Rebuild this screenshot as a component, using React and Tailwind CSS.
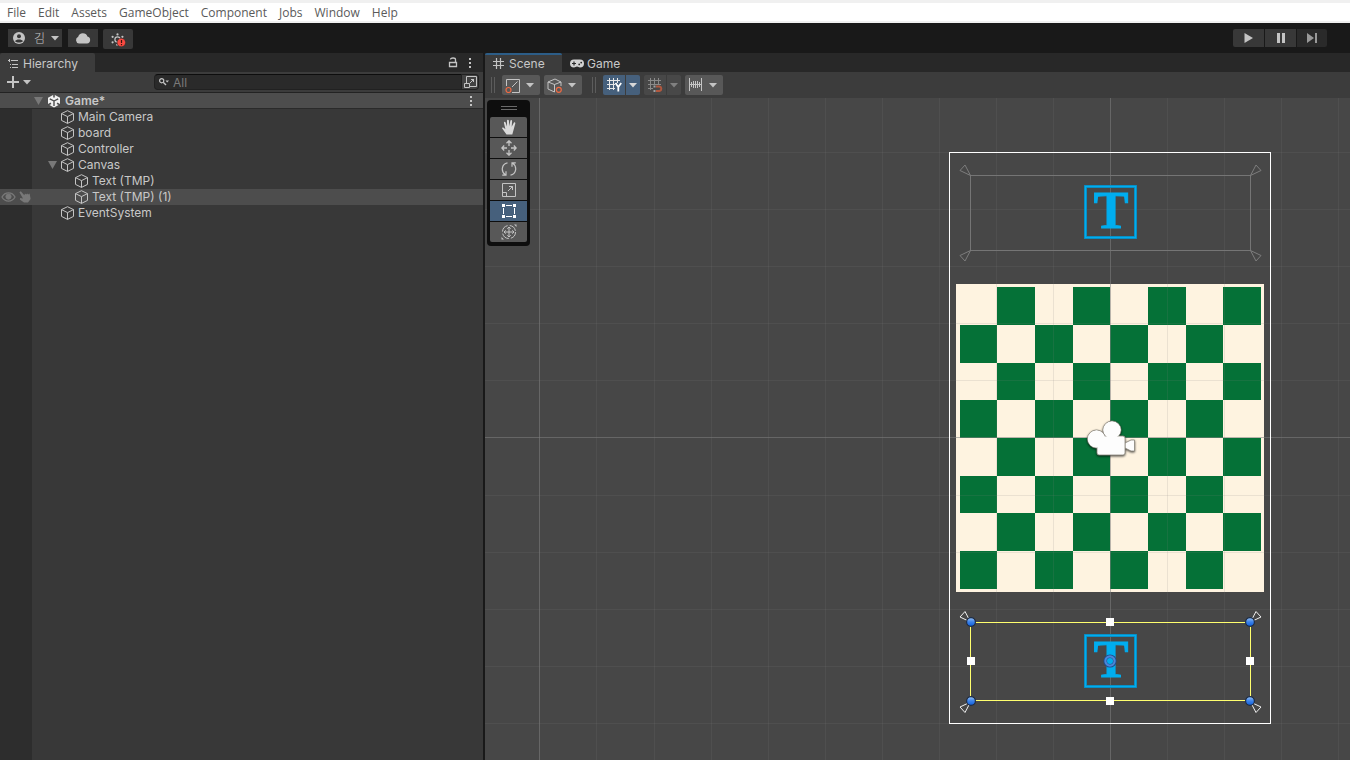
const MENU_ITEMS = ["File", "Edit", "Assets", "GameObject", "Component", "Jobs", "Window", "Help"];

const OBJECTS = [
  { name: "Main Camera", depth: 0 },
  { name: "board", depth: 0 },
  { name: "Controller", depth: 0 },
  { name: "Canvas", depth: 0, open: true },
  { name: "Text (TMP)", depth: 1 },
  { name: "Text (TMP) (1)", depth: 1, selected: true },
  { name: "EventSystem", depth: 0 },
];

function Caret({ className = "text-[#c4c4c4]" }) {
  return (
    <svg width="8" height="5" viewBox="0 0 8 5" className={`shrink-0 ${className}`}>
      <path d="M0 0h8L4 4.5z" fill="currentColor" />
    </svg>
  );
}

function FoldArrow() {
  return (
    <svg width="10" height="8" viewBox="0 0 10 8" className="shrink-0 text-[#787878]">
      <path d="M0 0h9L4.5 8z" fill="currentColor" />
    </svg>
  );
}

function Kebab() {
  return (
    <svg width="4" height="12" viewBox="0 0 4 12" fill="#c4c4c4">
      <rect x="1" y="1" width="2" height="2" />
      <rect x="1" y="5" width="2" height="2" />
      <rect x="1" y="9" width="2" height="2" />
    </svg>
  );
}

function CubeIcon() {
  return (
    <svg width="14" height="14" viewBox="0 0 14 14" fill="none" stroke="#c4c4c4" strokeLinejoin="round" className="shrink-0">
      <path d="M7.5 0.7L13.5 3.6V10.4L7.5 13.4L1.5 10.4V3.6zM1.5 3.6L7.5 6.6L13.5 3.6M7.5 6.6V13.4" />
    </svg>
  );
}

function UnityIcon() {
  return (
    <svg width="12" height="14" viewBox="0 0 12 14" fill="none" className="shrink-0">
      <path d="M6 0.5L12 3.7V10.3L6 13.5L0 10.3V3.7z" fill="#f0f0f0" />
      <path d="M6 7V12M6 7L1.8 4.8M6 7L10.2 4.8" stroke="#4d4d4d" strokeWidth="1.4" />
      <path d="M6 0V3.6M0 10.8L3 9.2M12 10.8L9 9.2" stroke="#4d4d4d" strokeWidth="1.6" />
    </svg>
  );
}

function PopOutIcon() {
  return (
    <svg width="14" height="14" viewBox="0 0 14 14" fill="none" stroke="#c4c4c4">
      <path d="M3.5 8V1.5H13.5V11.5H7M1.5 8.5H6.5V12.5H1.5zM7 8L11 4M8 4.5H10.5V7" />
    </svg>
  );
}

function MenuBar() {
  return (
    <nav className="flex h-[23px] items-center gap-3 border-y-2 border-t-3 border-[#f0f0f0] bg-white px-[7px] pt-[2px] font-['Open_Sans','Noto_Sans_CJK_KR',sans-serif] text-[12px] leading-4 text-[#5a5a5a]">
      {MENU_ITEMS.map((item) => (
        <button key={item}>{item}</button>
      ))}
    </nav>
  );
}

function TopToolbar() {
  return (
    <div className="flex h-[30px] items-start bg-[#191919] pt-[6px] pl-2">
      <button className="flex h-[18px] w-[54px] items-center bg-[#383838] pl-[5px] text-[#c4c4c4]">
        <svg width="12" height="12" viewBox="0 0 12 12">
          <circle cx="6" cy="6" r="6" fill="#c4c4c4" />
          <circle cx="6" cy="4.3" r="2" fill="#383838" />
          <path d="M2 9.3C3 6.8 9 6.8 10 9.3C8 11 4 11 2 9.3z" fill="#383838" />
        </svg>
        <span className="mr-[6px] ml-[9px] font-['Noto_Sans_CJK_KR',sans-serif] text-[12px] leading-4 font-light">김</span>
        <Caret />
      </button>
      <button aria-label="Cloud" className="ml-[6px] flex h-[18px] w-[30px] items-center justify-center bg-[#383838]">
        <svg width="16" height="12" viewBox="0 0 16 12">
          <path d="M4 11.5A3.5 3.5 0 0 1 3.2 4.8A4.8 4.8 0 0 1 12.4 4.6A3.5 3.5 0 0 1 12 11.5z" fill="#c4c4c4" />
        </svg>
      </button>
      <button aria-label="Services" className="ml-[5px] flex h-5 w-[30px] items-center justify-center rounded-xs bg-[#383838]">
        <svg width="16" height="16" viewBox="0 0 16 16">
          <circle cx="7.5" cy="8.5" r="2.6" fill="none" stroke="#c4c4c4" strokeWidth="1.2" />
          <g fill="#c4c4c4">
            <circle cx="7.5" cy="3.4" r="1.1" />
            <circle cx="2.6" cy="5.8" r="1.1" />
            <circle cx="12.4" cy="5.8" r="1.1" />
            <circle cx="2.6" cy="11.3" r="1.1" />
            <circle cx="7" cy="13.8" r="0.9" />
          </g>
          <circle cx="11.3" cy="11.5" r="4.3" fill="#fa4a41" stroke="#2b2b2b" strokeWidth="0.6" />
          <path d="M11.5 9V12M11.5 13V14.2" stroke="#3a1512" strokeWidth="1.2" />
        </svg>
      </button>
      <div className="mr-[23px] ml-auto flex gap-px">
        <button aria-label="Play" className="flex h-[18px] w-[31px] items-center justify-center rounded-l-xs bg-[#383838]">
          <svg width="9" height="10" viewBox="0 0 9 10">
            <path d="M0.5 0L9 5L0.5 10z" fill="#c4c4c4" />
          </svg>
        </button>
        <button aria-label="Pause" className="flex h-[18px] w-[31px] items-center justify-center bg-[#383838]">
          <svg width="8" height="10" viewBox="0 0 8 10" fill="#c4c4c4">
            <rect width="3" height="10" />
            <rect x="5" width="3" height="10" />
          </svg>
        </button>
        <button aria-label="Step" className="flex h-[18px] w-[30px] items-center justify-center rounded-r-xs bg-[#2a2a2a]">
          <svg width="10" height="10" viewBox="0 0 10 10" fill="#999999">
            <path d="M0 0L7 5L0 10z" />
            <rect x="8" width="2" height="10" />
          </svg>
        </button>
      </div>
    </div>
  );
}

function HierarchyRow({ name, depth, open, selected }) {
  return (
    <li className={`flex h-4 items-center ${selected ? "bg-[#4d4d4d]" : ""}`}>
      <div className="flex w-8 shrink-0 items-center gap-[3px] pl-px text-[#787878]">
        {selected && (
          <>
            <svg width="15" height="10" viewBox="0 0 15 10" fill="none" stroke="currentColor">
              <path d="M1 5C4 -0.5 11 -0.5 14 5C11 10.5 4 10.5 1 5z" strokeWidth="1.3" />
              <circle cx="7.5" cy="4.6" r="2.6" fill="currentColor" />
            </svg>
            <svg width="12" height="12" viewBox="0 0 12 12" fill="currentColor">
              <path d="M0.4 1.2L1.8 0.2L5.3 4.2L6 2.6L7.2 3.6L8.2 2.4L9.2 3.4L10.6 2.6L11.6 8L9 11.6H5L0.8 8.6L1.2 7L4 7.4z" />
            </svg>
          </>
        )}
      </div>
      <div className={`flex items-center gap-1 ${depth === 1 ? "pl-[42px]" : open ? "pl-4" : "pl-7"}`}>
        {open && (
          <span className="-mr-1 w-3">
            <FoldArrow />
          </span>
        )}
        <CubeIcon />
        <span>{name}</span>
      </div>
    </li>
  );
}

function HierarchyPanel() {
  return (
    <aside className="flex w-[483px] shrink-0 flex-col bg-[#383838]">
      <div className="flex h-[19px] items-center bg-[#282828]">
        <button className="flex h-full w-[95px] items-center gap-1 rounded-t-xs bg-[#3c3c3c] pt-[2px] pl-2">
          <svg width="11" height="10" viewBox="0 0 11 10" stroke="#c4c4c4">
            <path d="M0 1.5H2M3 1.5H10M2 5.5H3M4 5.5H10M2 8.5H3M4 8.5H10M1.5 0V3" />
          </svg>
          Hierarchy
        </button>
        <button aria-label="Lock" className="ml-auto">
          <svg width="10" height="11" viewBox="0 0 10 11" fill="none" stroke="#c4c4c4">
            <path d="M1.5 5.5H8.5V9.5H1.5z" strokeWidth="1.3" />
            <path d="M2.5 2.5C2.5 0.5 7.5 0.5 7.5 2.5V5" strokeWidth="1.3" />
          </svg>
        </button>
        <button aria-label="Hierarchy menu" className="mr-[11px] ml-[10px]">
          <Kebab />
        </button>
      </div>

      <div className="flex h-[21px] items-center border-b border-[#232323] bg-[#3c3c3c] pr-1 pl-[7px]">
        <button aria-label="Create" className="flex items-center gap-1">
          <svg width="12" height="12" viewBox="0 0 12 12" stroke="#c4c4c4" strokeWidth="2">
            <path d="M6 0V12M0 6H12" />
          </svg>
          <Caret />
        </button>
        <label className="ml-auto flex h-4 w-[308px] items-center gap-1 rounded-l-sm border border-[#212121] border-t-[#0d0d0d] bg-[#2a2a2a] pl-1">
          <svg width="10" height="8" viewBox="0 0 10 8" fill="none" stroke="#c4c4c4">
            <circle cx="2.7" cy="2.7" r="2.1" strokeWidth="1.2" />
            <path d="M4.2 4.2L7 7" strokeWidth="1.4" />
            <path d="M6.5 2.5H10L8.2 4.5z" fill="#c4c4c4" stroke="none" />
          </svg>
          <input
            aria-label="Search objects"
            placeholder="All"
            className="min-w-0 flex-1 bg-transparent text-[12px] leading-3 outline-none placeholder:text-[#7a7a7a]"
          />
        </label>
        <button aria-label="Open search window" className="flex h-4 w-[17px] items-center justify-center rounded-r-sm border border-l-0 border-[#212121] bg-[#424242]">
          <PopOutIcon />
        </button>
      </div>

      <div className="flex h-4 items-center border-b border-[#2a2a2a] bg-[#4d4d4d] pl-[34px] font-semibold">
        <FoldArrow />
        <span className="mr-[5px] ml-1">
          <UnityIcon />
        </span>
        Game*
        <button aria-label="Scene menu" className="mr-[10px] ml-auto">
          <Kebab />
        </button>
      </div>

      <ul className="flex-1 bg-linear-to-r from-[#2d2d2d] from-[32px] to-[#383838] to-[32px]">
        {OBJECTS.map((object) => (
          <HierarchyRow key={object.name} {...object} />
        ))}
      </ul>
    </aside>
  );
}

function Grip() {
  return <div className="h-4 w-1 shrink-0 border-x border-[#5c5c5c]" />;
}

function GridLines({ stroke }) {
  return <path d="M2.5 0V12M6.5 0V12M10.5 0V12M0 2.5H13M0 6.5H13M0 10.5H13" stroke={stroke} />;
}

function DropButton({ label, children }) {
  return (
    <button aria-label={label} className="flex h-5 w-[38px] items-center justify-between rounded-xs bg-[#585858] pr-[6px] pl-[3px]">
      {children}
      <Caret />
    </button>
  );
}

function SplitButton({ label, active, children }) {
  const tone = active ? "bg-[#46607c]" : "bg-[#484848]";
  return (
    <div className="flex gap-px">
      <button aria-label={label} className={`flex h-5 w-[22px] items-center justify-center rounded-l-xs ${tone}`}>
        {children}
      </button>
      <button aria-label={`${label} options`} className={`flex h-5 w-[14px] items-center justify-center rounded-r-xs ${tone}`}>
        <Caret className={active ? "text-[#d8d8d8]" : "text-[#808080]"} />
      </button>
    </div>
  );
}

function SceneToolbar() {
  return (
    <div className="flex h-[26px] items-center gap-1 bg-[#3c3c3c] pl-[6px]">
      <Grip />
      <div className="ml-[3px] flex gap-1">
        <DropButton label="Tool handle position">
          <svg width="15" height="15" viewBox="0 0 15 15" fill="none">
            <path d="M1.5 8V1.5H14.5V14.5H7M7 9L12.5 3.5" stroke="#c4c4c4" />
            <circle cx="3.5" cy="12" r="2.5" stroke="#ee6a43" strokeWidth="1.2" />
          </svg>
        </DropButton>
        <DropButton label="Tool handle rotation">
          <svg width="15" height="15" viewBox="0 0 15 15" fill="none">
            <path d="M7.5 14L1 11V4L8 1L14 4V8M1 4L7.5 6.5L14 4M7.5 6.5V14" stroke="#c4c4c4" strokeLinejoin="round" />
            <circle cx="11.8" cy="11.8" r="2.5" fill="#585858" stroke="#ee6a43" strokeWidth="1.2" />
          </svg>
        </DropButton>
      </div>
      <div className="mr-[3px] ml-[6px]">
        <Grip />
      </div>
      <SplitButton label="Grid axis" active>
        <svg width="15" height="14" viewBox="0 0 15 14">
          <GridLines stroke="#e8e8e8" />
          <path d="M8 5H15V14H8z" fill="#46607c" />
          <path d="M8.5 5L11.3 9L14.2 5M11.3 9V13.5" fill="none" stroke="#ffffff" strokeWidth="1.8" />
        </svg>
      </SplitButton>
      <SplitButton label="Snap to grid">
        <svg width="15" height="14" viewBox="0 0 15 14" fill="none">
          <GridLines stroke="#8a8a8a" />
          <path d="M5 7H15V14H5z" fill="#484848" />
          <path d="M8 8.5H11.5A2.3 2.3 0 0 1 11.5 13H8" stroke="#b0583f" strokeWidth="2" />
          <path d="M5.5 8.5H7.5M5.5 13H7.5" stroke="#a0a0a0" strokeWidth="2" />
        </svg>
      </SplitButton>
      <DropButton label="Snap increment">
        <svg width="15" height="14" viewBox="0 0 15 14" stroke="#c4c4c4">
          <path d="M1.5 0V13M3.5 4V9M5.5 3V10M7.5 3V10M9.5 3V10M11.5 4V9M13.5 0V13M1 6.5H14" />
        </svg>
      </DropButton>
    </div>
  );
}

const TOOLS = [
  {
    name: "View tool",
    icon: (
      <path
        d="M5.5 15.5L1.2 9.6C0.6 8.6 1.8 8 2.6 8.8L4.4 10.2L2.9 3.8C2.8 2.6 4.2 2.5 4.6 3.6L6 7.4L6 1.6C6.1 0.5 7.7 0.5 7.9 1.6L8.3 7.2L9.4 1.6C9.7 0.6 11.1 0.8 11.1 1.9L10.7 7.8L12.8 3.8C13.3 2.8 14.6 3.4 14.3 4.5L12.4 11.5L11.3 15.5z"
        fill="#dadada"
      />
    ),
  },
  {
    name: "Move tool",
    icon: (
      <g stroke="#c4c4c4" fill="none">
        <path d="M8 6V1.5M5.5 3.2L8 0.8L10.5 3.2M8 10V14.5M5.5 12.8L8 15.2L10.5 12.8M6 8H1.5M3.2 5.5L0.8 8L3.2 10.5M10 8H14.5M12.8 5.5L15.2 8L12.8 10.5" strokeWidth="1.3" />
      </g>
    ),
  },
  {
    name: "Rotate tool",
    icon: (
      <g stroke="#c4c4c4" fill="none" strokeWidth="1.2">
        <path d="M6.5 1.8C0.5 3 -0.5 10.5 4.5 14M1.2 14.2H5V10.3M9.5 14.2C15.5 13 16.5 5.5 11.5 2M14.8 1.8H11V5.7" />
      </g>
    ),
  },
  {
    name: "Scale tool",
    icon: (
      <g stroke="#c4c4c4" fill="none">
        <path d="M1.5 1.5H14.5V14.5H1.5zM1.5 10.5H5.5V14.5M7 9L11.5 4.5M8 4.5H11.5V8" />
      </g>
    ),
  },
  {
    name: "Rect tool",
    active: true,
    icon: (
      <g fill="#ffffff">
        <path d="M5 2H11V3H5zM5 13H11V14H5zM2 5H3V11H2zM13 5H14V11H13z" />
        <path d="M1 1H4V4H1zM12 1H15V4H12zM1 12H4V15H1zM12 12H15V15H12z" />
      </g>
    ),
  },
  {
    name: "Transform tool",
    icon: (
      <g stroke="#c4c4c4" fill="none">
        <circle cx="8" cy="8" r="6.5" strokeDasharray="8 2.2" />
        <path d="M8 3V13M3 8H13M6.3 4.7L8 3L9.7 4.7M6.3 11.3L8 13L9.7 11.3M4.7 6.3L3 8L4.7 9.7M11.3 6.3L13 8L11.3 9.7" />
        <path d="M13 0.5H15.5V3zM0.5 13V15.5H3z" fill="#c4c4c4" stroke="none" />
      </g>
    ),
  },
];

function ToolPalette() {
  return (
    <div className="absolute top-[2px] left-[2px] flex w-[43px] flex-col gap-px rounded-sm bg-[#0e0e0e] px-[3px] pb-1">
      <div className="flex h-4 flex-col items-center justify-center gap-[2px]">
        <span className="h-px w-4 bg-[#6a6a6a]" />
        <span className="h-px w-4 bg-[#6a6a6a]" />
      </div>
      {TOOLS.map((tool) => (
        <button
          key={tool.name}
          aria-label={tool.name}
          className={`flex h-5 items-center justify-center first-of-type:rounded-t-xs last-of-type:rounded-b-xs ${tool.active ? "bg-[#46607c]" : "bg-[#585858]"}`}
        >
          <svg width="16" height="16" viewBox="0 0 16 16">
            {tool.icon}
          </svg>
        </button>
      ))}
    </div>
  );
}

// Scene coordinates are pixels from the world origin.
const GRID_X = [-514, -456, -399, -342, -285, -228, -171, -114, -57, 57, 114, 171, 228, 285, 342];
const GRID_Y = [-285, -228, -171, -114, -57, 58, 115, 172, 229, 286, 343];
const FILES_X = [-150, -113, -75, -37, 0, 38, 76, 113, 151];
const RANKS_Y = [-150, -112, -74, -37, 1, 39, 76, 114, 152];

function Board() {
  const squares = [];
  for (let row = 0; row < 8; row++) {
    for (let col = 0; col < 8; col++) {
      if ((row + col) % 2 === 0) continue;
      squares.push(
        <rect
          key={`${row}-${col}`}
          x={FILES_X[col]}
          y={RANKS_Y[row]}
          width={FILES_X[col + 1] - FILES_X[col]}
          height={RANKS_Y[row + 1] - RANKS_Y[row]}
        />
      );
    }
  }
  return (
    <g shapeRendering="crispEdges">
      <rect x="-154" y="-153" width="308" height="308" fill="#fef3e0" />
      <g fill="#057137">{squares}</g>
    </g>
  );
}

function Anchors({ top, bottom, stroke }) {
  const petal = "M0 0L-10.5 -5L-5.5 -10.5z";
  return (
    <g fill="none" stroke={stroke}>
      <path d={petal} transform={`translate(-139.5 ${top})`} />
      <path d={petal} transform={`translate(140.5 ${top}) scale(-1 1)`} />
      <path d={petal} transform={`translate(-139.5 ${bottom}) scale(1 -1)`} />
      <path d={petal} transform={`translate(140.5 ${bottom}) scale(-1 -1)`} />
    </g>
  );
}

function TextGizmo({ y }) {
  return (
    <g>
      <rect x="-24.5" y={y - 25.5} width="50" height="51" fill="none" stroke="#0c88ba" strokeWidth="3" />
      <rect x="-24.5" y={y - 25.5} width="50" height="51" fill="none" stroke="#00adef" strokeWidth="1.4" />
      <text
        x="1"
        y={y + 16}
        textAnchor="middle"
        fill="#00adef"
        stroke="#00adef"
        className="font-['Liberation_Serif',serif] text-[52px] font-bold"
      >
        T
      </text>
    </g>
  );
}

function CameraGizmo() {
  return (
    <g fill="#fdfdfd" className="drop-shadow-[0_1px_1px_rgba(0,0,0,0.7)]">
      <path d="M15 6L21 3H24.5V14H21L15 11z" stroke="#8a857b" strokeWidth="0.8" />
      <g stroke="#8a857b" strokeWidth="0.8">
        <circle cx="-13.5" cy="2" r="9" />
        <circle cx="2" cy="-7" r="9" />
        <rect x="-13" y="-1" width="28" height="19" rx="2" />
      </g>
      <circle cx="-13.5" cy="2" r="8.6" />
      <circle cx="2" cy="-7" r="8.6" />
      <rect x="-12" y="0" width="26" height="17" rx="2" />
    </g>
  );
}

function SceneView() {
  return (
    <svg width="100%" height="100%" className="block bg-[#474747]">
      <defs>
        <linearGradient id="knob" x1="0" y1="0" x2="0" y2="1">
          <stop offset="0" stopColor="#9cc4f4" />
          <stop offset="0.5" stopColor="#3b82ea" />
          <stop offset="1" stopColor="#0f5fdc" />
        </linearGradient>
      </defs>
      <svg x="625" y="339" overflow="visible">
        <Board />

        <g fill="#808080" shapeRendering="crispEdges">
          {GRID_X.map((x) => (
            <rect key={x} x={x} y="-339" width="1" height="2000" fillOpacity="0.15" />
          ))}
          {GRID_Y.map((y) => (
            <rect key={y} x="-625" y={y} width="2000" height="1" fillOpacity="0.15" />
          ))}
          <rect x="-571" y="-339" width="1" height="2000" fillOpacity="0.55" />
          <rect x="0" y="-339" width="1" height="2000" fillOpacity="0.55" />
          <rect x="-625" y="0" width="2000" height="1" fillOpacity="0.55" />
        </g>

        <rect x="-160.5" y="-284.5" width="321" height="571" fill="none" stroke="#ffffff" />

        <rect x="-139.5" y="-261.5" width="280" height="75" fill="none" stroke="#757575" />
        <Anchors top={-261.5} bottom={-186.5} stroke="#7d7d7d" />
        <TextGizmo y={-225} />

        <CameraGizmo />

        <rect x="-139.5" y="185.5" width="280" height="78" fill="none" stroke="#ffff6e" />
        <Anchors top={185} bottom={265} stroke="#f0f0f0" />
        <TextGizmo y={224} />

        <g fill="#ffffff">
          <rect x="-4" y="181" width="8" height="8" />
          <rect x="-4" y="260" width="8" height="8" />
          <rect x="-143" y="220" width="8" height="8" />
          <rect x="136" y="220" width="8" height="8" />
        </g>
        <g fill="url(#knob)" stroke="#1d2c45" strokeWidth="1.2">
          <circle cx="-139" cy="185" r="4.4" />
          <circle cx="140" cy="185" r="4.4" />
          <circle cx="-139" cy="264" r="4.4" />
          <circle cx="140" cy="264" r="4.4" />
        </g>
        <circle cx="0" cy="224" r="4.8" fill="none" stroke="#1f4a86" strokeWidth="3.6" />
        <circle cx="0" cy="224" r="4.6" fill="none" stroke="#4a86d8" strokeWidth="2.2" />
      </svg>
    </svg>
  );
}

function ScenePanel() {
  return (
    <main className="flex min-w-0 flex-1 flex-col bg-[#282828]">
      <div className="flex h-[19px] items-center">
        <button className="flex h-full w-[77px] items-center gap-[5px] rounded-t-xs border-t-2 border-[#2c5d87] bg-[#3c3c3c] pl-2">
          <svg width="11" height="11" viewBox="0 0 11 11" stroke="#c4c4c4">
            <path d="M3.5 0V11M7.5 0V11M0 3.5H11M0 7.5H11" strokeWidth="1.2" />
          </svg>
          Scene
        </button>
        <button className="flex items-center gap-[3px] pt-[2px] pl-2">
          <svg width="14" height="9" viewBox="0 0 14 9">
            <path d="M4 0.5H10A4 4 0 0 1 10 8.5C8.6 8.5 8.4 7.6 7 7.6S5.4 8.5 4 8.5A4 4 0 0 1 4 0.5z" fill="#d2d2d2" />
            <path d="M2 4.5H6M4 2.5V6.5" stroke="#282828" strokeWidth="1.2" />
            <circle cx="9.2" cy="5.4" r="0.9" fill="#282828" />
            <circle cx="11.2" cy="3.6" r="0.9" fill="#282828" />
          </svg>
          Game
        </button>
      </div>
      <SceneToolbar />
      <div className="relative min-h-0 flex-1 overflow-hidden">
        <SceneView />
        <ToolPalette />
      </div>
    </main>
  );
}

export default function App() {
  return (
    <div className="flex h-screen flex-col overflow-hidden bg-[#191919] font-[Inter,'Noto_Sans_CJK_KR',sans-serif] text-[12px] leading-4 text-[#c8c8c8]">
      <MenuBar />
      <TopToolbar />
      <div className="flex min-h-0 flex-1 gap-[2px]">
        <HierarchyPanel />
        <ScenePanel />
      </div>
    </div>
  );
}
